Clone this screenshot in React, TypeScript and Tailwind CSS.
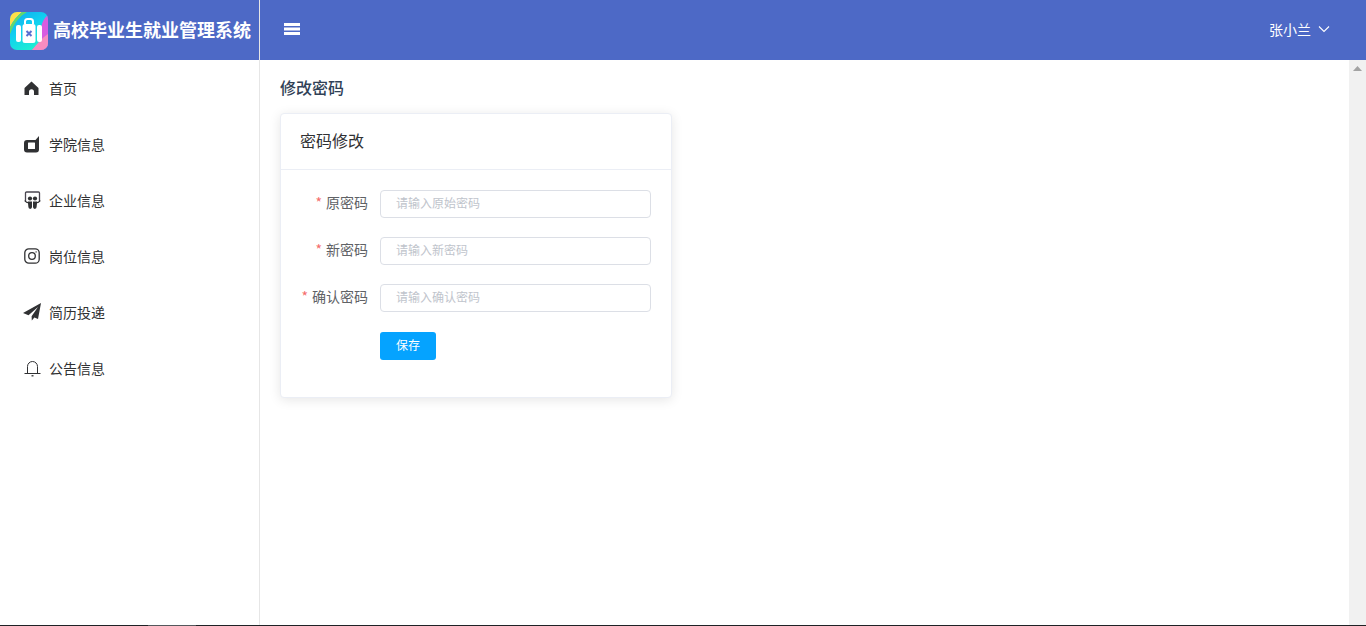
const font = { fontFamily: '"Noto Sans CJK SC", "Liberation Sans", sans-serif' };

function Logo() {
  return (
    <svg width="38" height="38" viewBox="0 0 38 38" className="shrink-0 mt-[2px]">
      <defs>
        <linearGradient id="lg" x1="0" y1="0" x2="0.6" y2="1">
          <stop offset="0" stopColor="#10a8f0" />
          <stop offset="0.5" stopColor="#10d0f0" />
          <stop offset="1" stopColor="#1ff0d0" />
        </linearGradient>
        <clipPath id="lc"><rect width="38" height="38" rx="7" /></clipPath>
      </defs>
      <g clipPath="url(#lc)">
        <rect width="38" height="38" fill="url(#lg)" />
        <path d="M0 0H12C7 4 3 9 0 15Z" fill="#fde04a" />
        <path d="M0 15C3 9 7 4 12 0H17C10 4 4 11 1 20L0 22Z" fill="#5fd86f" />
        <path d="M38 3C33 7 31 13 31 19C31 27 29 33 22 38H38Z" fill="#d85ce0" />
        <path d="M38 22C32 26 27 32 22 38H38Z" fill="#f78cc0" />
        <rect x="6" y="13" width="5" height="17" rx="2" fill="#fff" />
        <rect x="27" y="13" width="5" height="17" rx="2" fill="#fff" />
        <rect x="12.5" y="12" width="13" height="19" rx="2.5" fill="#fff" />
        <path d="M15 12V9.5A2.5 2.5 0 0 1 17.5 7h3A2.5 2.5 0 0 1 23 9.5V12" fill="none" stroke="#fff" strokeWidth="2" />
        <path d="M16.5 19l5 5M21.5 19l-5 5" stroke="#5a6fd0" strokeWidth="2" />
      </g>
    </svg>
  );
}

function Icon({ k }: { k: number }) {
  const c = "#303133";
  if (k === 0)
    return (
      <svg width="16" height="16" viewBox="0 0 16 16" className="ml-px">
        <path d="M7.5 1.5 14.5 8v7h-4.5v-3.2a2.5 2.5 0 0 0-5 0V15H.5V8Z" fill={c} />
      </svg>
    );
  if (k === 1)
    return (
      <svg width="16" height="17" viewBox="0 0 16 17" className="ml-px">
        <path d="M3 4H11.5L15 0V13.5A3 3 0 0 1 12 16.5H3a3 3 0 0 1-3-3V7a3 3 0 0 1 3-3Z" fill={c} />
        <rect x="4" y="6.5" width="7" height="6.5" rx="0.5" fill="#fff" />
      </svg>
    );
  if (k === 2)
    return (
      <svg width="17" height="18" viewBox="0 0 17 18" className="ml-px">
        <path d="M1.5 11V2a1 1 0 0 1 1-1h12a1 1 0 0 1 1 1v9" fill="none" stroke="#4a4650" strokeWidth="1.3" />
        <path d="M.8 9.5c1 1.7 2.5 2.3 4 2.3M16.2 9.5c-1 1.7-2.5 2.3-4 2.3" fill="none" stroke={c} strokeWidth="1.2" />
        <circle cx="6" cy="7.5" r="2.1" fill={c} />
        <circle cx="11" cy="7.5" r="2.1" fill={c} />
        <path d="M3.8 10.5h4.2v5.6a1.8 1.8 0 0 1-3.6 0Z" fill={c} />
        <path d="M9 10.5h4.2l-.6 5.6a1.8 1.8 0 0 1-3.6 0Z" fill={c} />
      </svg>
    );
  if (k === 3)
    return (
      <svg width="16" height="16" viewBox="0 0 16 16" fill="none" stroke={c} strokeWidth="1.3" className="ml-px">
        <rect x="0.8" y="0.8" width="14.4" height="14.4" rx="4" />
        <circle cx="8" cy="8" r="3.3" />
        <circle cx="12.1" cy="3.9" r="0.7" fill={c} stroke="none" />
      </svg>
    );
  if (k === 4)
    return (
      <svg width="18" height="18" viewBox="0 0 18 18">
        <path d="M18 0 0 10 5.5 12.2 15 4 8.6 13.2 8.8 17.6 11.4 14.4 15 16Z" fill={c} />
      </svg>
    );
  return (
    <svg width="17" height="18" viewBox="0 0 17 18" fill="none" stroke={c} strokeWidth="1" className="ml-px">
      <path d="M3.5 14V7.5a5 5 0 0 1 10 0V14" />
      <path d="M.5 14.5h16" />
      <path d="M7.5 16.8h2" strokeWidth="1.3" />
    </svg>
  );
}

const nav = ["首页", "学院信息", "企业信息", "岗位信息", "简历投递", "公告信息"];
const fields = [
  ["原密码", "请输入原始密码"],
  ["新密码", "请输入新密码"],
  ["确认密码", "请输入确认密码"],
];

export default function App() {
  return (
    <div className="h-screen flex flex-col overflow-hidden bg-white" style={font}>
      <header className="h-[60px] shrink-0 flex bg-[#4d69c6] text-white">
        <div className="w-[260px] shrink-0 border-r border-[#e6e6e6] flex items-center pl-[10px] gap-[5px]">
          <Logo />
          <span className="text-[18px] leading-[24px] font-bold whitespace-nowrap pb-[2px]">高校毕业生就业管理系统</span>
        </div>
        <div className="flex-1 flex items-center justify-between pl-[24px] pr-[36px]">
          <svg width="17" height="14" viewBox="0 0 17 14" fill="#fff" className="-mt-[3px]">
            <rect x="0" y="1" width="16" height="3" />
            <rect x="0" y="5.5" width="16" height="3" />
            <rect x="0" y="10" width="16" height="3" />
          </svg>
          <div className="flex items-center gap-[7px] text-[14px] pb-[2px]">
            <span>张小兰</span>
            <svg width="12" height="8" viewBox="0 0 12 8" fill="none" stroke="#fff" strokeWidth="1.1">
              <path d="M1 1.5 6 6.5 11 1.5" />
            </svg>
          </div>
        </div>
      </header>
      <div className="flex-1 flex min-h-0">
        <aside className="w-[260px] shrink-0 border-r border-[#e6e6e6]">
          {nav.map((n, i) => (
            <div key={n} className="h-[56px] flex items-center text-[14px] text-[#303133]">
              <span className="w-[49px] pl-[23px] flex justify-start shrink-0"><Icon k={i} /></span>
              <span>{n}</span>
            </div>
          ))}
        </aside>
        <main className="flex-1 min-w-0 pt-[14px] pl-[20px]">
          <h2 className="text-[16px] leading-[26px] font-medium text-[#304156]">修改密码</h2>
          <div className="mt-[13px] w-[392px] h-[285px] bg-white rounded-[4px] border border-[#ebeef5] shadow-[0_2px_12px_0_rgba(0,0,0,0.1)]">
            <div className="h-[56px] border-b border-[#ebeef5] pl-[19px] pb-[4px] flex items-center text-[16px] text-[#303133]">密码修改</div>
            <div className="pt-[20px] pr-[20px]">
              {fields.map(([l, p]) => (
                <div key={l} className="flex items-center h-[28px] mb-[19px]">
                  <label className="w-[99px] pr-[12px] pb-[4px] shrink-0 text-right text-[14px] text-[#606266]">
                    <span className="text-[#f56c6c] mr-[4px]">*</span>
                    {l}
                  </label>
                  <input
                    placeholder={p}
                    readOnly
                    className="flex-1 min-w-0 h-[28px] border border-[#dcdfe6] rounded-[4px] px-[15px] pb-[3px] text-[12px] outline-none placeholder:text-[#c0c4cc]"
                  />
                </div>
              ))}
              <div className="pl-[99px]">
                <button className="w-[56px] h-[28px] pb-[2px] bg-[#05a3ff] text-white text-[12px] rounded-[3px]">保存</button>
              </div>
            </div>
          </div>
        </main>
        <div className="w-[17px] shrink-0 bg-[#f1f1f1] flex justify-center pt-[6px]">
          <svg width="9" height="5" viewBox="0 0 9 5"><path d="M4.5 0 9 5H0Z" fill="#a3a3a3" /></svg>
        </div>
      </div>
      <div className="h-px shrink-0 bg-[#1f2225] flex">
        <div className="w-[148px]" />
        <div className="w-[48px] bg-[#55585c]" />
      </div>
    </div>
  );
}
